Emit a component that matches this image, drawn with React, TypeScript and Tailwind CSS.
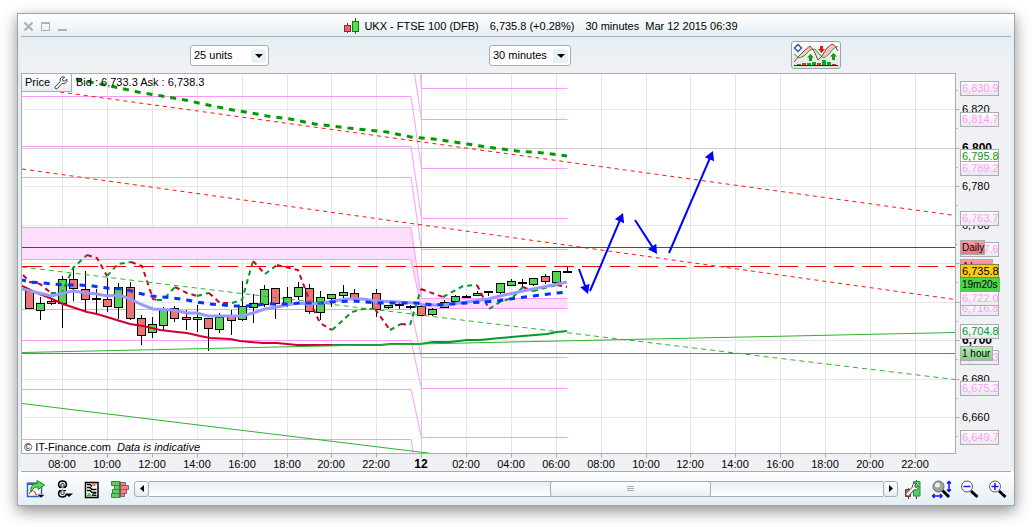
import React from "react";

type Candle = [x: number, high: number, low: number, top: number, bottom: number, color: string];

const UP = "#55d355";
const DOWN = "#ee7373";
const FLAT = "#000000";

const candles: Candle[] = [
  [29, 291, 309, 291, 309, DOWN],
  [40, 297, 320, 303, 311, UP],
  [51, 298, 305, 301, 304, DOWN],
  [62, 276, 328, 279, 304, UP],
  [73, 266, 301, 279, 289, DOWN],
  [85, 271, 311, 289, 300, DOWN],
  [96, 289, 314, 298, 300, FLAT],
  [107, 278, 312, 299, 307, DOWN],
  [118, 283, 319, 287, 308, UP],
  [130, 282, 320, 287, 319, DOWN],
  [141, 315, 345, 318, 336, DOWN],
  [152, 317, 338, 324, 333, UP],
  [163, 307, 331, 310, 326, UP],
  [174, 306, 322, 308, 319, DOWN],
  [186, 310, 330, 317, 320, DOWN],
  [197, 305, 332, 317, 320, UP],
  [208, 318, 351, 318, 329, DOWN],
  [219, 313, 333, 317, 330, UP],
  [231, 310, 335, 315, 321, DOWN],
  [242, 281, 321, 306, 320, UP],
  [253, 294, 323, 303, 308, UP],
  [264, 285, 307, 289, 305, UP],
  [275, 288, 319, 288, 304, DOWN],
  [287, 287, 307, 297, 305, UP],
  [298, 282, 300, 287, 297, UP],
  [309, 284, 314, 288, 312, DOWN],
  [320, 291, 320, 297, 313, UP],
  [331, 294, 307, 294, 299, UP],
  [343, 285, 298, 292, 296, UP],
  [354, 289, 300, 293, 300, DOWN],
  [376, 289, 317, 293, 310, DOWN],
  [388, 305, 309, 305, 308, UP],
  [399, 303, 309, 304, 306, FLAT],
  [410, 305, 309, 306, 308, FLAT],
  [421, 304, 316, 306, 316, DOWN],
  [432, 308, 316, 309, 315, UP],
  [444, 300, 308, 302, 308, UP],
  [455, 295, 303, 296, 302, UP],
  [466, 295, 298, 296, 298, FLAT],
  [477, 291, 296, 293, 296, UP],
  [488, 291, 296, 291, 293, FLAT],
  [500, 283, 294, 283, 293, UP],
  [511, 279, 286, 281, 286, UP],
  [522, 279, 287, 282, 284, FLAT],
  [533, 278, 286, 278, 285, UP],
  [545, 274, 284, 276, 282, DOWN],
  [556, 271, 284, 271, 283, UP],
  [567, 267, 273, 271, 273, FLAT],
];

const hours: [number, string][] = [
  [62, "08:00"], [107, "10:00"], [152, "12:00"], [197, "14:00"], [242, "16:00"],
  [287, "18:00"], [331, "20:00"], [376, "22:00"], [421, "12"], [466, "02:00"],
  [511, "04:00"], [556, "06:00"], [601, "08:00"], [646, "10:00"], [690, "12:00"],
  [735, "14:00"], [780, "16:00"], [825, "18:00"], [870, "20:00"], [915, "22:00"],
];

const prices: [number, string][] = [
  [109, "6,820"], [148, "6,800"], [186, "6,780"], [225, "6,760"], [263, "6,740"],
  [302, "6,720"], [340, "6,700"], [379, "6,680"], [417, "6,660"],
];

const minorTicks = [90, 128, 167, 205, 244, 282, 321, 359, 398, 436];

// pivot levels: previous day y, current day y
const pivots: [number, number][] = [
  [-30, 88], [50, 119], [96, 168], [146, 218], [177, 249], [227, 298],
  [259, 308], [309, 357], [340, 388], [389, 437], [439, 500],
];

const pivotLabels: [number, string][] = [
  [430, "6,649.7"], [381, "6,675.2"], [350, "6,691.3"], [301, "6,716.8"], [291, "6,722.0"],
  [242, "6,747.6"], [211, "6,763.7"], [161, "6,789.2"], [112, "6,814.7"], [81, "6,830.9"],
];

const oscillator: [string, string][] = [
  [DOWN, "23,275 30,282 40,284 51,293"],
  [UP, "51,293 62,293 73,268 87,255"],
  [DOWN, "87,255 97,258 107,276"],
  [UP, "107,276 118,264 131,262"],
  [DOWN, "131,262 142,266 153,299 157,300"],
  [UP, "157,300 163,300 175,287"],
  [DOWN, "175,287 187,293 197,296"],
  [UP, "197,296 209,293"],
  [DOWN, "209,293 220,303 232,303"],
  [UP, "232,303 242,300 253,261"],
  [DOWN, "253,261 265,274"],
  [UP, "265,274 277,265"],
  [DOWN, "277,265 298,270 310,302 320,323 332,330"],
  [UP, "332,330 352,312 363,309 375,309"],
  [DOWN, "375,309 390,330"],
  [UP, "390,330 401,324"],
  [DOWN, "401,324 410,325"],
  [UP, "410,325 421,289"],
  [DOWN, "421,289 443,297"],
  [UP, "443,297 463,286 477,285"],
  [DOWN, "477,285 489,309"],
  [UP, "489,309 500,302 512,298 523,287"],
  [DOWN, "523,287 533,291"],
  [UP, "533,291 557,285"],
  [DOWN, "557,285 567,287"],
];

const PriceTag = ({ y, text, color }: { y: number; text: string; color: string }) => (
  <g>
    <rect x="960.5" y={y + 0.5} width="38" height="14" fill="url(#tagGrad)" stroke="#a9adb3" />
    <text x="962" y={y + 11} fill={color}>{text}</text>
  </g>
);

const Arrow = ({ x1, y1, x2, y2 }: { x1: number; y1: number; x2: number; y2: number }) => {
  const length = Math.hypot(x2 - x1, y2 - y1);
  const angle = (Math.atan2(y2 - y1, x2 - x1) * 180) / Math.PI;
  return (
    <g transform={`translate(${x1} ${y1}) rotate(${angle})`}>
      <path d={`M0 0H${length - 7}`} stroke="#0000ff" strokeWidth="2" />
      <path d={`M${length} 0l-9 -5v10z`} fill="#0000ff" />
    </g>
  );
};

const Chart = () => (
  <svg
    viewBox="21 73 990 398"
    className="block w-full font-['Liberation_Sans',Arial,sans-serif] text-[11px]"
    role="img"
    aria-label="UKX - FTSE 100 price chart"
  >
    <defs>
      <clipPath id="plot">
        <rect x="22" y="74" width="933" height="379" />
      </clipPath>
      <linearGradient id="tagGrad" x1="0" y1="0" x2="0" y2="1">
        <stop offset="0" stopColor="#ffffff" />
        <stop offset="1" stopColor="#e9e9eb" />
      </linearGradient>
      <linearGradient id="redGrad" x1="0" y1="0" x2="0" y2="1">
        <stop offset="0" stopColor="#ff9c9c" />
        <stop offset="1" stopColor="#e87878" />
      </linearGradient>
      <linearGradient id="greenGrad" x1="0" y1="0" x2="0" y2="1">
        <stop offset="0" stopColor="#b4ecb0" />
        <stop offset="1" stopColor="#86cc86" />
      </linearGradient>
    </defs>

    <rect x="21" y="73" width="990" height="398" fill="#f0f1f4" />
    <rect x="21" y="73" width="934" height="380" fill="#ffffff" />

    <g clipPath="url(#plot)" fill="none">
      {/* grid and pivot levels */}
      <g transform="translate(.5 .5)">
        {hours.map(([x, label]) => (
          <path key={x} d={`M${x} 73V453`} stroke={label === "12" ? "#cfcfcf" : "#e6e6e6"} />
        ))}
        {prices.map(([y, label]) => (
          <path key={y} d={`M21 ${y}H955`} stroke={label === "6,800" ? "#cfcfcf" : "#e6e6e6"} />
        ))}
        <path d="M21 227H411L421 298H567V308H421L411 259H21z" fill="#fddffd" />
        {pivots.map(([a, b]) => (
          <path key={a} d={`M21 ${a}H410.5L421 ${b}H567`} stroke="#ff99ff" />
        ))}
      </g>

      {/* candles */}
      {candles.map(([x, high, low, top, bottom, color]) => (
        <g key={x} stroke="#000000">
          <path d={`M${x + 0.5} ${high}V${low}`} />
          <rect x={x - 3.5} y={top + 0.5} width="8" height={Math.max(bottom - top - 1, 1)} fill={color} />
        </g>
      ))}

      {/* moving averages */}
      <g strokeWidth="2">
        {oscillator.map(([color, points]) => (
          <polyline key={points} points={points} stroke={color === UP ? "#009922" : "#cc0033"} strokeDasharray="5 4" />
        ))}
        <polyline
          stroke="#cc0033"
          points="22,286 37,293 50,298 63,304 75,308 87,312 97,314 107,317 120,321 130,324 143,326 160,330 177,332 187,333 200,336 210,338 230,339 240,341 263,343 277,343 297,345 332,345"
        />
        <polyline
          stroke="#009933"
          points="332,345 380,345 390,344 420,344 433,342 450,342 467,340 480,340 500,338 523,336 547,334 557,332 567,331"
        />
      </g>
      <g strokeWidth="3">
        <polyline
          stroke="#9999ff"
          points="22,289 43,294 52,296 63,293 73,291 87,293 97,294 107,296 118,295 128,298 140,304 153,309 173,310 187,313 197,313 208,316 232,316 242,316 253,313 265,309 277,307 287,305 297,303 310,304 323,303 333,301 347,299 363,299 377,301 400,302 415,303 424,305 443,305 467,302 488,299 500,296 523,291 543,287 567,282"
        />
        <polyline
          stroke="#0033ff"
          strokeDasharray="6 6"
          strokeDashoffset="2"
          points="22,280 30,282 43,283 63,285 80,285 93,286 107,288 125,289 138,293 152,296 173,298 187,300 197,302 210,304 223,305 235,306 247,306 267,304 290,304 300,303 323,303 333,302 353,301 377,303 417,303 433,305 467,303 497,301 510,299 533,296 557,293 567,292"
        />
        <polyline
          stroke="#009900"
          strokeDasharray="6 6"
          points="76,79 100,84 115,87 138,92 162,96 185,100 208,105 233,110 257,114 267,116 290,119 315,124 340,127 348,128 387,132 411,137 434,139 467,144 494,148 517,151 544,153 567,156"
        />
      </g>

      {/* trend lines */}
      <path d="M60 92L955 215.5" stroke="#ff1111" strokeDasharray="4 4" />
      <path d="M22 169L955 299.5" stroke="#ff1111" strokeDasharray="4 4" />
      <path d="M22 267L955 379.5" stroke="#33b033" strokeDasharray="5 4" />
      <path d="M22 352.5L955 332.5M22 403.5L440 454.5M22 353.5H955" stroke="#2fb02f" />
      <path d="M22 247.5H955" stroke="#ff0000" />
      <path d="M22 266.5H955" stroke="#ff0000" strokeDasharray="20 8" />

      <Arrow x1={579} y1={269} x2={588} y2={294} />
      <Arrow x1={590} y1={291} x2={623} y2={213} />
      <Arrow x1={635} y1={220} x2={657} y2={254} />
      <Arrow x1={669} y1={253} x2={713} y2={151} />
    </g>

    <rect x="22" y="441" width="179" height="12" fill="#ffffff" fillOpacity=".8" />
    <text x="24" y="451">© IT-Finance.com</text>
    <text x="117" y="451" fontStyle="italic">Data is indicative</text>
    <text x="76" y="86">Bid : 6,733.3 Ask : 6,738.3</text>

    {/* axes */}
    <g transform="translate(.5 .5)" stroke="#a9adb3" fill="none">
      <rect x="21" y="73" width="934" height="380" />
      {hours.map(([x]) => <path key={x} d={`M${x} 453v4`} />)}
      {prices.map(([y]) => <path key={y} d={`M955 ${y}h4`} />)}
      {minorTicks.map((y) => <path key={y} d={`M955 ${y}h2`} />)}
    </g>

    {hours.map(([x, label]) => (
      <text key={x} x={x} y="468" textAnchor="middle" className={label === "12" ? "text-[12px] font-bold" : ""}>
        {label}
      </text>
    ))}
    {prices.map(([y, label]) => (
      <text key={y} x="962" y={y + 4} className={label === "6,800" || label === "6,700" ? "text-[12px] font-bold" : ""}>
        {label}
      </text>
    ))}
    {pivotLabels.map(([y, label]) => <PriceTag key={y} y={y} text={label} color="#ff99ff" />)}
    <rect x="960.5" y="149.5" width="38" height="12" fill="#ffffff" stroke="#a9adb3" />
    <text x="962" y="160" fill="#009900">6,795.8</text>
    <PriceTag y={324} text="6,704.8" color="#009933" />

    <g className="text-[10px]">
      <rect x="960.5" y="240.5" width="24" height="14" fill="url(#redGrad)" stroke="#a9adb3" />
      <text x="962" y="251">Daily</text>
      <rect x="960.5" y="259.5" width="32" height="14" fill="url(#redGrad)" stroke="#a9adb3" />
      <text x="962" y="270">4 hour</text>
      <rect x="960.5" y="346.5" width="32" height="14" fill="url(#greenGrad)" stroke="#a9adb3" />
      <text x="962" y="357">1 hour</text>
      <rect x="960" y="277" width="40" height="15" fill="#4bd44b" />
      <text x="962" y="288">19m20s</text>
    </g>
    <rect x="960.5" y="264.5" width="38" height="13" fill="#ffcc11" stroke="#8d8050" />
    <text x="962" y="275">6,735.8</text>
  </svg>
);

const Dropdown = ({ label, value, options, className }: { label: string; value: string; options: string[]; className: string }) => (
  <div className={`relative ${className}`}>
    <select
      aria-label={label}
      defaultValue={value}
      className="block h-[21px] w-full appearance-none rounded-[3px] border border-[#a9adb3] bg-white pl-[3px] text-[11px] leading-[19px] outline-none"
    >
      {options.map((o) => <option key={o}>{o}</option>)}
    </select>
    <span className="pointer-events-none absolute top-1 right-[3px] flex h-[14px] w-[15px] items-center justify-center rounded-xs bg-[#e9f1f5]">
      <svg width="8" height="4" viewBox="0 0 8 4"><path d="M0 0h8L4 4z" /></svg>
    </span>
  </div>
);

const ToolButton = ({ label, children }: { label: string; children: React.ReactNode }) => (
  <button type="button" aria-label={label} className="flex h-5 w-5 shrink-0 items-center justify-center">
    <svg width="20" height="20" viewBox="0 0 20 20" fill="none">{children}</svg>
  </button>
);

const Wrench = () => (
  <svg width="14" height="14" viewBox="0 0 14 14" fill="#fff" stroke="#333" strokeWidth="1">
    <path d="M12.8 3.2 10.6 5.2 8.8 4.8 8.5 3.2 10.6 1.1C8.8 .3 6.6 1.2 6.2 3.2 6 4.2 6.3 5 6.3 5.6L1.2 10.6C.2 11.8 1.8 13.6 3.2 12.6L8.2 7.4C11 8.2 13.7 6.2 12.8 3.2z" />
  </svg>
);

const App: React.FC = () => {
  return (
    <div className="bg-white px-[17px] pt-[13px] pb-[21px] font-['Liberation_Sans',Arial,sans-serif] text-[11px] text-black">
      <div className="border border-[#9fa2a6] bg-[#e5eef3] px-[3px] shadow-[0_5px_14px_rgba(0,0,0,0.45)]">
        {/* title bar */}
        <div className="-mx-[3px] bg-linear-to-b from-white to-[#e4eef3] px-[3px]">
          <div className="flex h-[23px] items-center border-b border-[#a9adb3]">
            <div className="flex gap-2 pt-[2px] pl-[3px]">
              <button type="button" aria-label="Close">
                <svg width="9" height="9" viewBox="0 0 9 9" stroke="#adb1b5" strokeWidth="2"><path d="M.5 .5l8 8M8.5 .5l-8 8" /></svg>
              </button>
              <button type="button" aria-label="Maximize">
                <svg width="9" height="9" viewBox="0 0 9 9" fill="none" stroke="#adb1b5"><path d="M.5 .5h8v8h-8zM.5 1.5h8" /></svg>
              </button>
              <button type="button" aria-label="Minimize">
                <svg width="9" height="9" viewBox="0 0 9 9"><path d="M0 7h9v2H0z" fill="#adb1b5" /></svg>
              </button>
            </div>
            <div className="flex flex-1 items-center justify-center pt-[2px] pl-1 whitespace-pre">
              <svg width="16" height="16" viewBox="0 0 16 16" className="mr-1">
                <path d="M3.5 5v10" stroke="#a02020" />
                <rect x=".5" y="7.5" width="6" height="6" fill="#e46a6a" stroke="#a02020" />
                <path d="M11.5 0v16" stroke="#137813" />
                <rect x="8.5" y="3.5" width="6" height="10" fill="#4fe04f" stroke="#137813" />
              </svg>
              <span>UKX - FTSE 100 (DFB)</span>
              <span className="ml-[11px]">6,735.8 (+0.28%)</span>
              <span className="ml-[11px]">30 minutes</span>
              <span className="ml-[6px]">Mar 12 2015 06:39</span>
            </div>
          </div>
        </div>

        {/* toolbar */}
        <div className="flex h-9 items-center justify-between bg-linear-to-b from-[#e6eff4] to-[#f0f1f4] pr-[170px] pl-[169px]">
          <Dropdown label="Units" value="25 units" options={["25 units", "50 units", "100 units"]} className="w-[79px]" />
          <Dropdown label="Timeframe" value="30 minutes" options={["30 minutes", "1 hour", "Daily"]} className="w-[82px]" />
          <button type="button" aria-label="Indicators" className="rounded-[3px] border border-[#a0a4a8] bg-linear-to-b from-white to-[#dfe1e3]">
            <svg width="48" height="26" viewBox="1 1 48 26" fill="none">
              <path d="M3 13L8 17 13 15 17 10 14 9 8 15 3 21z" fill="#d3efd3" />
              <path d="M13 10L19 5 23 9 19 9 13 15 10 16zM30 15L36 8 41 3 44 6 38 13 33 17z" fill="#f6c4c4" />
              <path d="M22 9L25 9 33 17 28 20zM44 7L47 5V11z" fill="#cfeccf" />
              <path d="M3 13L8 17 13 15 19 9 24 8 28 13 33 17 38 13 42 8 47 5" stroke="#22aa33" />
              <path d="M3 21L8 15 14 9 19 5 23 10 27 19 31 15 36 7 41 3 44 5 47 10" stroke="#b82a3c" />
              <path d="M7 3.500L9 5.500 10.500 7 9 8.500 7 10.500 5 8.500 3.500 7 5 5.500z" fill="#fff" stroke="#2b5cab" strokeWidth="1.500" />
              <path d="M19.500 13l3.500 3.500h-2V20h-3v-3.500h-2zM42.500 12l3.500 3.500h-2V19h-3v-3.500h-2z" fill="#0aa00a" />
              <path d="M29 5h3v3h2l-3.500 4L27 8h2z" fill="#ee1111" />
              <path d="M6 23h4v1H6zM16 22h4v2h-4zM21 21h4v3h-4zM31 19h4v5h-4zM36 21h4v3h-4z" fill="#0fa80f" />
              <path d="M11 22h4v2h-4zM26 22h4v2h-4zM41 23h4v1h-4z" fill="#e03030" />
              <path d="M3 24.500h44" stroke="#1818a8" />
            </svg>
          </button>
        </div>

        {/* chart */}
        <div className="relative">
          <Chart />
          <button
            type="button"
            className="absolute top-0 left-0 flex h-[19px] items-center gap-1 border border-[#a9adb3] bg-linear-to-b from-white to-[#e6eef2] px-[3px]"
          >
            Price
            <Wrench />
          </button>
        </div>

        {/* bottom bar */}
        <div className="-mx-[3px] bg-linear-to-b from-white to-[#e4eef3] px-[3px]">
          <div className="flex h-[34px] items-center border-t border-[#a9adb3] pr-[3px] pl-1">
            <div className="flex gap-2 pt-[3px]">
              <ToolButton label="Export chart">
                <path d="M2.500 3.500h14v13h-14z" fill="#fff" stroke="#2b62c4" strokeWidth="1.500" />
                <path d="M2 2.500h10v2.500H2z" fill="#2b62c4" />
                <path d="M4 14l3-4 3 2 1 3 4-1" stroke="#dd2222" />
                <path d="M6 12C5 6 8 3.500 12 3.500V.5l7.500 4.500L13 9.500V7C10 7 8 8 6 12z" fill="#5bd35b" stroke="#1d8a1d" />
                <path d="M12 14.500h8l-4 3.500z" fill="#000" stroke="#fff" strokeWidth=".5" />
              </ToolButton>
              <ToolButton label="Link windows">
                <path d="M7.500 7.500C4.500 6 5 1 9.500 1s5 5 2 6.500" fill="#fff" stroke="#000" strokeWidth="1.500" />
                <path d="M8 8V4.500c0-1.500 3-1.500 3 0V8M6 7.500h2.500M10.500 7.500H13" stroke="#000" />
                <path d="M9.500 4.500v8" stroke="#555" strokeWidth=".5" />
                <path d="M7.500 10.500c-3 1.500-2.500 6.500 2 6.500 2 0 3.500-1 4-3" fill="#fff" stroke="#000" strokeWidth="1.500" />
                <path d="M8 10v3.500c0 1.500 3 1.500 3 0V10M6 10.500h2.500M10.500 10.500H13" stroke="#000" />
                <path d="M12 13.500h8l-4 3.500z" fill="#000" />
              </ToolButton>
              <ToolButton label="Order list">
                <path d="M4.500 2.500h12.500v15H4.500z" fill="#fff" stroke="#000" strokeWidth="1.500" />
                <path d="M6 4.500h3l2 2M6 7.500h3l2 2h4.500M6 10.500h3l2 2h4.500M11 15l4.500 .5M12 13h3" stroke="#000" strokeWidth="1.500" />
                <path d="M10 3h6.500l-3.500 4z" fill="#ee7373" />
                <path d="M5 16.500l3-4 3.500 4z" fill="#44bb44" />
              </ToolButton>
              <ToolButton label="Order book">
                <path d="M2.500 1.500h8v4h-8zM5.500 5.500h5v4h-5zM3.500 9.500h7v4h-7zM2.500 13.500h8v4h-8z" fill="#5bd05b" stroke="#5f6b5f" />
                <path d="M11.500 2.500h5v3h-5zM11.500 5.500h8v4h-8zM11.500 9.500h6v4h-6zM11.500 13.500h4v3h-4z" fill="#f58080" stroke="#7a6666" />
                <path d="M11 1v17" stroke="#555" />
              </ToolButton>
            </div>

            <div className="mr-[6px] ml-[5px] flex h-4 flex-1">
              <button type="button" aria-label="Scroll left" className="flex w-[15px] items-center justify-center rounded-[3px] border border-[#a9adb3] bg-linear-to-b from-white to-[#e6eef2]">
                <svg width="4" height="7" viewBox="0 0 4 7"><path d="M4 0v7L0 3.500z" /></svg>
              </button>
              <div className="flex flex-1 border-y border-[#a9adb3] bg-linear-to-b from-[#e6eff3] to-white">
                <div className="w-[54.6%]" />
                <div className="-my-px flex w-[22%] items-center justify-center rounded-[3px] border border-[#a9adb3] bg-linear-to-b from-white to-[#e8f0f3]">
                  <svg width="7" height="5" viewBox="0 0 7 5" stroke="#a9adb3"><path d="M0 .5h7M0 2.500h7M0 4.500h7" /></svg>
                </div>
              </div>
              <button type="button" aria-label="Scroll right" className="flex w-[15px] items-center justify-center rounded-[3px] border border-[#a9adb3] bg-linear-to-b from-white to-[#e6eef2]">
                <svg width="4" height="7" viewBox="0 0 4 7"><path d="M0 0v7l4-3.500z" /></svg>
              </button>
            </div>

            <div className="flex gap-2 pt-[3px]">
              <ToolButton label="Chart settings">
                <path d="M4.500 8v11M12.500 0v19" stroke="#444" />
                <path d="M1.500 9.500h5v7h-5z" fill="#ee5a5a" stroke="#8a2f2f" />
                <path d="M9.500 1.500h6.500v14.500H9.500z" fill="#55d065" stroke="#2c8a3c" />
                <path d="M14 6L12.500 7.500 11 7 11 5 12.500 3.500C10 2.500 8 4.500 8.500 7L2.500 13c-1.500 1.500 .5 4 2.500 2.500L10.500 9.500c3 1 4.500-1.500 3.500-3.500z" fill="#fff" stroke="#444" />
              </ToolButton>
              <ToolButton label="Fit to window">
                <path d="M10.500 10.500l6.500 6.500" stroke="#000" strokeWidth="3" />
                <circle cx="6.500" cy="6.500" r="5.500" fill="#a2a2a2" stroke="#666" />
                <circle cx="5.500" cy="5" r="2.500" fill="#f0f0f0" />
                <path d="M17 1.500v10M15 3.500l2-2 2 2M15 9.500l2 2 2-2M.5 16h9.500M2.500 14l-2 2 2 2M8 14l2 2-2 2" stroke="#1111ff" strokeWidth="1.500" />
              </ToolButton>
              <ToolButton label="Zoom out">
                <path d="M11 11l6.500 6" stroke="#000" strokeWidth="3" />
                <circle cx="7" cy="6.500" r="5.500" fill="#fff" stroke="#555" />
                <path d="M3.500 6.500h7" stroke="#1111ff" strokeWidth="1.500" />
              </ToolButton>
              <ToolButton label="Zoom in">
                <path d="M11 11l6.500 6" stroke="#000" strokeWidth="3" />
                <circle cx="7" cy="6.500" r="5.500" fill="#fff" stroke="#555" />
                <path d="M3.500 6.500h7M7 3v7" stroke="#1111ff" strokeWidth="1.500" />
              </ToolButton>
            </div>
          </div>
        </div>
      </div>
    </div>
  );
};

export default App;
